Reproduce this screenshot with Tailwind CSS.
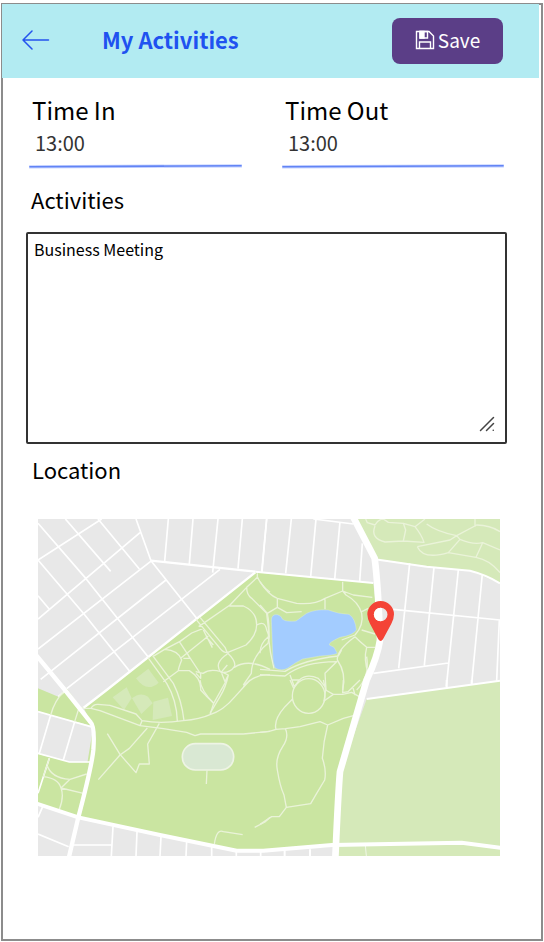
<!DOCTYPE html>
<html lang="en">
<head>
<meta charset="utf-8">
<meta name="viewport" content="width=device-width, initial-scale=1">
<title>My Activities</title>
<script src="https://cdn.jsdelivr.net/npm/@tailwindcss/browser@4"></script>
</head>
<body class="flex min-h-screen flex-col bg-white font-['Noto_Sans_CJK_SC','Noto_Sans',sans-serif] text-black">
<div class="mx-px mt-[3px] mb-px flex grow flex-col border-2 border-[#8c8c8c]">
  <header class="mr-[2px] -mt-px -ml-px flex h-[74px] items-center bg-[#b2ebf2] pr-9 pl-5">
    <a href="#" aria-label="Back" class="shrink-0 pb-[2px]">
      <svg class="h-5 w-7" viewBox="0 0 28 20" fill="none" stroke="#2453ee" stroke-width="1.5" stroke-linecap="round" stroke-linejoin="round"><path d="M26.500 10H1M10 1L1 10l9 9"/></svg>
    </a>
    <h1 class="ml-[52px] pb-1 text-[22px] leading-8 font-bold text-[#1f52f0]">My Activities</h1>
    <button type="button" class="ml-auto flex h-[46px] w-[111px] items-center justify-center gap-[3px] rounded-lg bg-[#5b3e87] pb-[2px] text-[19px] text-white">
      <svg class="h-5 w-5" viewBox="0 0 20 20" fill="none" stroke="#fff" stroke-width="1.4"><path d="M1.500 1.500H14l4.500 4.500v12.500h-17z"/><path d="M4.500 18.500v-6.500h11v6.500"/><path d="M5 1.500h7.500V8H5z"/><path d="M5 1.500h4V8H5z" fill="#fff"/></svg>
      <span class="leading-8">Save</span>
    </button>
  </header>
  <main>
    <div class="grid grid-cols-[213fr_222fr] gap-10 pt-4 pr-[37px] pl-[26px]">
      <div>
        <label for="in" class="block pl-[3px] text-2xl leading-8">Time In</label>
        <input id="in" type="text" value="13:00" class="mt-[3px] block h-7 w-full pl-[6px] text-xl leading-7 text-[#333] outline-none">
        <svg class="mt-[6px] block h-[6px] w-full" viewBox="0 0 213 6" preserveAspectRatio="none"><path d="M1 3.800L212 2.800" stroke="#c3d1ff" stroke-width="3.200" stroke-linecap="round"/><path d="M1 3.800L212 2.800" stroke="#6284f5" stroke-width="1.600" stroke-linecap="round"/></svg>
      </div>
      <div>
        <label for="out" class="block pl-[3px] text-2xl leading-8">Time Out</label>
        <input id="out" type="text" value="13:00" class="mt-[3px] block h-7 w-full pl-[6px] text-xl leading-7 text-[#333] outline-none">
        <svg class="mt-[6px] block h-[6px] w-full" viewBox="0 0 222 6" preserveAspectRatio="none"><path d="M1 3.800L221 2.800" stroke="#c3d1ff" stroke-width="3.200" stroke-linecap="round"/><path d="M1 3.800L221 2.800" stroke="#6284f5" stroke-width="1.600" stroke-linecap="round"/></svg>
      </div>
    </div>
    <label for="act" class="mt-[14px] block pl-7 text-[22px] leading-8">Activities</label>
    <div class="relative mt-[17px] mr-[34px] ml-[23px]">
      <textarea id="act" class="block h-[212px] w-full resize-none rounded-[2px] border-2 border-[#333] px-[6px] py-[3px] text-base leading-6 outline-none">Business Meeting</textarea>
      <svg class="pointer-events-none absolute right-3 bottom-3 h-4 w-4" viewBox="0 0 16 16" fill="none" stroke="#444" stroke-width="1.500" stroke-linecap="round"><path d="M1.500 14.500l13-13M7.500 14.500l7-7M14.200 14.300h.1"/></svg>
    </div>
    <h2 class="mt-[9px] pl-[29px] text-[22px] leading-8">Location</h2>
    <div class="mt-[34px] mr-[41px] ml-[35px]">
      <svg class="block w-full" viewBox="24 27 1386 1011" role="img" aria-label="Map" fill="none" stroke-linejoin="round">
        <!-- land -->
        <path fill="#e8e8e8" d="M24 27h1386v1011H24z"/>
        <g fill="#cae5a1">
          <path d="M676 187L1030 220L1050 400L1010 510L930 790L916 1010L620 1022L145 922L190 650L160 592L230 540z"/>
          <path d="M24 535L85 560L110 535L195 650L24 605zM24 732L120 757H183L145 922L24 880z"/>
        </g>
        <path fill="#d5e9b9" d="M965 27L1040 148L1210 172L1320 182L1410 220V27zM1010 567L1410 512V1038H916L930 790z"/>
        <!-- streets -->
        <g stroke="#fff" stroke-width="5">
          <path d="M24 150L215 27M24 327L330 68M24 417L365 152M32 508L408 210M110 536L570 178M24 40L168 206L354 440M106 27L242 184M204 27L328 177M24 150L162 312L299 484M24 257L58 298M318 27L363 152L500 325M415 27L404 154M489 27L478 162M564 27L548 188M637 27L624 176M710 27L695 184"/>
          <path d="M363 152L676 185M160 594L230 540L676 187" stroke-width="7"/>
          <g transform="translate(690 0)">
            <path d="M20 27L6 186M94 27L77 190M168 27L152 200M240 35L224 208M307 100L299 215M160 27L280 42M449 160L416 475M522 172L493 466M595 180L559 530M667 192L635 520M718 330L710 512M400 298L720 330M340 490L565 459"/>
            <path d="M-14 185L340 219M345 148L500 170L630 182Q680 195 720 220" stroke-width="6"/>
          </g>
          <g transform="translate(0 510)">
            <path d="M85 50L104 34M24 95L190 142M62 105L28 220M134 125L100 240M24 220L118 246H182M58 235L24 340M24 462L116 500M38 380L24 412M130 495H245M249 440L244 528M321 455L318 528M393 470L390 528M470 485L468 528M545 498V528M619 515V528M692 515V528"/>
          </g>
          <g transform="translate(690 510)"><path d="M320 57L720 2M560 0V25M635 0V12M74 512V528M150 508V528" stroke-width="6"/><path d="M316 495L319 528" stroke-width="2"/></g>
        </g>
        <!-- sports ground and stadium -->
        <g fill="#d5e9b9"><path d="M318 505L355 476L386 518Q350 550 318 505zM248 562L290 532L305 565L282 600zM306 565Q330 545 354 560L368 580L334 612zM370 575L414 563L426 618L368 630z"/></g>
        <rect x="457" y="701" width="154" height="79" rx="39" fill="#d9e8d3" stroke="#eef4e5" stroke-width="5"/>
        <!-- footpaths -->
        <g stroke="#eaf3d9" stroke-width="4">
          <path d="M682 190V202L650 232L600 285L506 350M650 232Q650 255 665 265L710 310M682 200Q692 225 720 247M598 288H640Q680 305 680 345Q680 375 648 405L592 428M498 328L570 415Q580 428 592 428M510 322L585 412L592 428M680 345Q705 330 710 360L718 380M710 310L718 380L714 400Q665 440 664 490L640 525M354 443L410 520Q440 570 442 633M368 437L430 520Q455 570 462 632M368 440L404 418L450 394L485 369L520 355M404 418Q445 420 455 450Q445 475 445 482L400 515M448 395L512 492M452 445L535 378M520 360L547 413M528 380L550 405M460 445H480L472 430M445 482H478Q515 505 512 540Q530 560 551 580M497 485L519 490Q540 475 573 485L595 495Q588 530 570 560L540 610M592 428Q620 455 613 470Q600 490 573 487Q550 460 592 432M575 485L592 465M613 472Q655 445 720 478M640 530Q675 490 720 495M512 492V505L498 490M595 495L585 515L575 490"/>
          <g transform="translate(690 0)">
            <path d="M0 215Q25 255 52 265L110 280Q165 285 195 265L248 243L280 255L337 262M248 215V243L258 255M52 265V292L22 310L0 285M52 292L80 308L125 305M195 268V298M258 255Q295 275 305 310Q312 345 285 375L245 390M305 305L325 295M305 360L345 372M285 380Q300 395 320 412H345M320 412Q310 450 325 490M22 310Q30 350 25 380Q0 400 0 430M25 380Q30 430 42 475M285 380Q230 420 232 450Q260 490 248 540M0 478L75 484Q130 450 235 438L245 420M0 494L75 498Q130 455 230 455L195 490L198 540M90 495L103 530M95 510H118L103 530M118 510Q140 490 175 505L195 530M320 440Q330 500 290 540"/>
            <path d="M317 27L322 38L345 45Q355 27 370 27M345 48Q330 85 375 96L430 93L437 60L430 40L385 37L370 27M430 40L465 50L495 27M465 50Q485 75 492 97L430 93M500 42Q530 65 590 77L570 90Q520 100 472 110M472 110Q490 150 565 128L600 88L590 77L650 45Q690 45 720 65M645 27V50M600 88Q640 105 668 98L720 120M668 98L648 142L565 128M648 142Q690 150 720 188"/>
          </g>
          <g transform="translate(0 510)">
            <path d="M165 85H183Q190 72 204 73L240 76L318 102L336 122L330 137L210 92L183 85M330 137L400 146L470 157L495 167L512 162L640 162L720 154M336 122Q390 132 460 122Q510 118 540 104Q580 92 615 50L660 0M510 0Q512 30 551 70L540 104M551 70L590 0M232 161L270 223L318 278L328 252H358L353 192L388 130M352 144L298 205L270 225L205 299M531 270L529 312M674 442L705 426L720 412M553 492Q560 445 580 455L638 464M100 37Q75 60 62 105M160 82L145 90L134 125M50 252Q62 295 120 298L170 282M40 290Q85 295 93 324L120 298M93 324L160 340M93 324Q103 350 88 388M58 235L40 290"/>
          </g>
          <g transform="translate(690 510)">
            <path d="M0 157Q30 155 48 148L76 146L120 140L180 125L203 135L250 115L283 106M48 148Q40 120 75 80L97 58M90 0L101 25M76 146Q88 170 68 200Q45 235 52 270Q60 320 72 345L79 382L58 410H35L0 433M203 135Q190 185 187 235Q200 270 194 300L170 340L152 371L79 382M190 0L197 30L220 43H248L275 37L302 52M197 30L192 63L220 43M250 0L248 38L264 35L300 0M278 20L285 45"/>
            <ellipse cx="146" cy="48" rx="49" ry="52"/>
          </g>
        </g>
        <!-- lake -->
        <path transform="translate(690 0)" fill="#a3ccff" stroke="#eaf3d9" stroke-width="1" d="M34 330Q35 312 52 314Q64 316 68 328Q78 336 108 333L140 310Q165 297 205 300Q235 312 267 313Q286 325 289 360Q280 376 240 382Q205 398 208 405L222 412L232 430Q220 436 180 438L128 447Q105 458 84 474Q65 485 45 474Q37 455 38 430z"/>
        <!-- main roads -->
        <g stroke="#fff" stroke-width="16">
          <path d="M968 18L1034 145Q1045 230 1050 390Q1043 440 1010 510L930 785Q925 840 916 1045" stroke-width="20"/>
          <path d="M18 435L105 540L182 637Q195 650 190 720Q185 770 145 922L116 1045" stroke-width="13"/>
          <path d="M18 880L145 922L390 975L620 1022H700L906 1005L1295 998L1415 1014" stroke-width="12"/>
        </g>
        <!-- pin -->
        <path fill="#f44336" fill-rule="evenodd" d="M1052 273a40 40 0 0 1 40 40q0 13-8 28l-25 47q-7 10-14 0l-25-47q-8-15-8-28a40 40 0 0 1 40-40zm0 20a20 20 0 1 0 0 41a20 20 0 1 0 0-41z"/>
        <path fill="#fff" d="M1052 293a20 20 0 0 0 0 41z"/>
      </svg>
    </div>
  </main>
</div>
</body>
</html>
